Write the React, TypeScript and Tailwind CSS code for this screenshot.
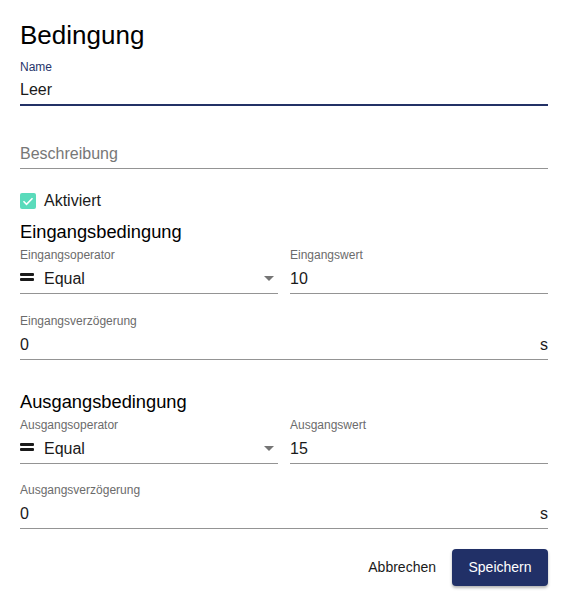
import type { ReactNode } from "react";

function EqualIcon() {
  return (
    <span className="mr-[10px] flex w-[14px] shrink-0 -translate-y-[2px] flex-col gap-[2px]">
      <span className="h-[3px] w-[14px] rounded-[1px] bg-[#1a1a1a]" />
      <span className="h-[3px] w-[14px] rounded-[1px] bg-[#1a1a1a]" />
    </span>
  );
}

function Arrow() {
  return (
    <svg width="10" height="5" viewBox="0 0 10 5" className="ml-auto mr-[4px] shrink-0">
      <path d="M0 0h10L5 5z" fill="#757575" />
    </svg>
  );
}

type FieldProps = {
  label?: string;
  children: ReactNode;
  className?: string;
};

function Field({ label, children, className = "" }: FieldProps) {
  return (
    <div className={`flex min-w-0 flex-col ${className}`}>
      <div className="h-[14px] text-[12px] leading-[14px] text-[#6b6b6b]">{label}</div>
      <div className="mt-[7px] box-content flex h-[19px] items-center border-b border-[#949494] pb-[5px] text-[16px] leading-[19px] text-[#1a1a1a]">
        {children}
      </div>
    </div>
  );
}

function SelectField({ label, value }: { label: string; value: string }) {
  return (
    <Field label={label}>
      <EqualIcon />
      <span>{value}</span>
      <Arrow />
    </Field>
  );
}

export default function App() {
  return (
    <div className="h-[608px] w-[570px] bg-white pl-[20px] pr-[22px] pt-[19px] font-['Liberation_Sans',Arial,sans-serif] text-black">
      <h1 className="text-[26px] leading-[32px] font-normal">Bedingung</h1>

      <div className="mt-[9px] flex flex-col">
        <div className="h-[14px] text-[12px] leading-[14px] text-[#27356b]">Name</div>
        <div className="mt-[6px] box-content flex h-[19px] items-center border-b-2 border-[#233166] pb-[5px] text-[16px] leading-[19px] text-[#1a1a1a]">
          Leer
        </div>
      </div>

      <div className="mt-[17px] flex flex-col">
        <div className="h-[14px]" />
        <div className="mt-[7px] box-content flex h-[19px] items-center border-b border-[#949494] pb-[5px] text-[16px] leading-[19px] text-[#777]">
          Beschreibung
        </div>
      </div>

      <label className="mt-[24px] flex h-[16px] items-center gap-[8px] text-[16px] leading-[16px] text-[#1a1a1a]">
        <span className="flex h-[16px] w-[16px] items-center justify-center rounded-[2px] bg-[#5adbbb]">
          <svg width="16" height="16" viewBox="0 0 16 16">
            <path d="M3.5 8.3l3 3L12.5 5.2" fill="none" stroke="white" strokeWidth="1.6" />
          </svg>
        </span>
        Aktiviert
      </label>

      <h2 className="mt-[12px] text-[18.3px] leading-[22px] font-normal">Eingangsbedingung</h2>
      <div className="mt-[5px] grid grid-cols-2 gap-x-[12px]">
        <SelectField label="Eingangsoperator" value="Equal" />
        <Field label="Eingangswert">10</Field>
      </div>
      <Field label="Eingangsverzögerung" className="mt-[20px]">
        <span>0</span>
        <span className="ml-auto">s</span>
      </Field>

      <h2 className="mt-[31px] text-[18.3px] leading-[22px] font-normal">Ausgangsbedingung</h2>
      <div className="mt-[5px] grid grid-cols-2 gap-x-[12px]">
        <SelectField label="Ausgangsoperator" value="Equal" />
        <Field label="Ausgangswert">15</Field>
      </div>
      <Field label="Ausgangsverzögerung" className="mt-[19px]">
        <span>0</span>
        <span className="ml-auto">s</span>
      </Field>

      <div className="mt-[20px] flex items-center justify-end gap-[8px]">
        <button type="button" className="h-[37px] rounded-[4px] px-[8px] text-[14px] text-[#1a1a1a]">
          Abbrechen
        </button>
        <button
          type="button"
          className="h-[37px] w-[96px] rounded-[4px] bg-[#213067] text-[14px] text-white shadow-[0_2px_3px_rgba(0,0,0,0.3)]"
        >
          Speichern
        </button>
      </div>
    </div>
  );
}
